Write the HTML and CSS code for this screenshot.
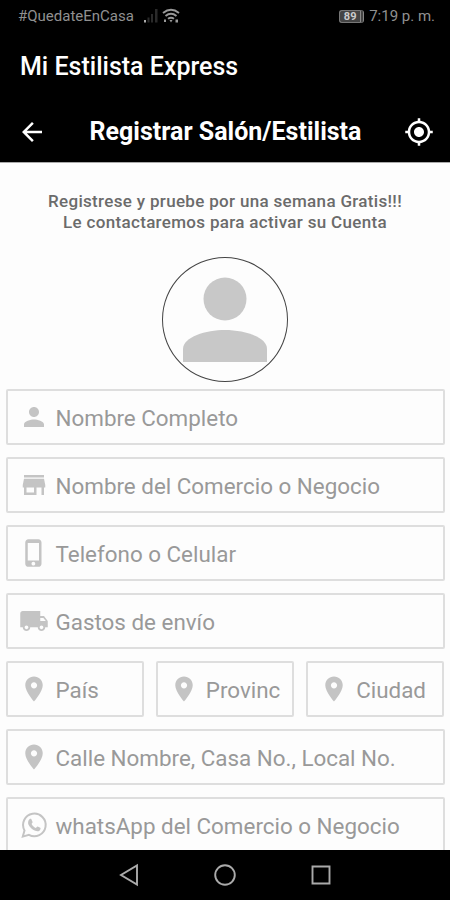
FILE: index.html
```html
<!DOCTYPE html>
<html lang="es">

<head>
    <meta charset="UTF-8">
    <meta name="viewport" content="width=device-width, initial-scale=1.0">
    <title>Mi Estilista Express</title>
    <link rel="stylesheet" href="styles.css">
</head>

<body>
    <div class="screen">
        <div class="status">
            <span class="carrier">#QuedateEnCasa</span>
            <svg class="signal" width="16" height="16" viewBox="0 0 16 16">
                <path fill="#aaa" d="M1 12h2v2.500H1z" />
                <path fill="#2a2a2a" d="M4.500 9.500h2v5h-2zM8 6h2v8.500H8zM12 1h2.500v13.500H12z" />
            </svg>
            <svg class="wifi" width="18" height="16" viewBox="0 0 18 16" fill="none" stroke="#999" stroke-width="1.900">
                <path d="M1 5Q9-1.500 17 5M3.500 8Q9 3.500 14.500 8M6 10.800Q9 8.500 12 10.800" />
                <path fill="#999" stroke="none" d="M7.500 12h3L9 14.500zM13.500 11.500h2.500V14.500h-2.500zM2 11.500h2V14H2z" />
            </svg>
            <span class="battery">89</span>
            <span class="clock">7:19 p. m.</span>
        </div>

        <h1 class="app-name">Mi Estilista Express</h1>

        <div class="toolbar">
            <svg width="30" height="30" viewBox="0 0 24 24" fill="#fff">
                <path d="M20 11H7.830l5.590-5.590L12 4l-8 8 8 8 1.410-1.410L7.830 13H20v-2z" />
            </svg>
            <h2 class="title">Registrar Salón/Estilista</h2>
            <svg width="30" height="30" viewBox="0 0 24 24" fill="#fff">
                <path d="M12 8c-2.210 0-4 1.790-4 4s1.790 4 4 4 4-1.790 4-4-1.790-4-4-4zm8.940 3c-.46-4.170-3.770-7.480-7.940-7.940V1h-2v2.060C6.830 3.520 3.520 6.830 3.060 11H1v2h2.060c.46 4.170 3.770 7.480 7.940 7.940V23h2v-2.060c4.170-.46 7.480-3.770 7.940-7.940H23v-2h-2.060zM12 19c-3.870 0-7-3.130-7-7s3.130-7 7-7 7 3.130 7 7-3.130 7-7 7z" />
            </svg>
        </div>

        <div class="content">
            <div class="intro">
                <p>Registrese y pruebe por una semana Gratis!!!</p>
                <p>Le contactaremos para activar su Cuenta</p>
            </div>

            <div class="avatar">
                <svg width="86" height="86" viewBox="0 0 86 86" fill="#c8c8c8">
                    <circle cx="43" cy="22" r="21.500" />
                    <path d="M1 85V72C1 60 24 53 43 53s42 7 42 19v13z" />
                </svg>
            </div>

            <div class="form">
                <div class="field">
                    <svg class="icon" width="30" height="30" viewBox="0 0 24 24">
                        <path d="M12 12c2.210 0 4-1.790 4-4s-1.790-4-4-4-4 1.790-4 4 1.790 4 4 4zm0 2c-2.670 0-8 1.340-8 4v2h16v-2c0-2.660-5.330-4-8-4z" />
                    </svg>
                    <span class="hint">Nombre Completo</span>
                </div>
                <div class="field">
                    <svg class="icon" width="30" height="30" viewBox="0 0 24 24">
                        <path d="M20 4H4v2h16V4zm1 10v-2l-1-5H4l-1 5v2h1v6h10v-6h4v6h2v-6h1zm-9 4H6v-4h6v4z" />
                    </svg>
                    <span class="hint">Nombre del Comercio o Negocio</span>
                </div>
                <div class="field">
                    <svg class="icon" width="30" height="30" viewBox="0 0 24 24">
                        <path d="M15.500 1h-8C6.120 1 5 2.120 5 3.500v17C5 21.880 6.120 23 7.500 23h8c1.380 0 2.500-1.120 2.500-2.500v-17C18 2.120 16.880 1 15.500 1zm-4 21c-.83 0-1.500-.67-1.500-1.500s.67-1.500 1.500-1.500 1.500.67 1.500 1.500-.67 1.500-1.500 1.500zm4.500-4H7V4h9v14z" />
                    </svg>
                    <span class="hint">Telefono o Celular</span>
                </div>
                <div class="field">
                    <svg class="icon" width="30" height="30" viewBox="0 0 24 24">
                        <path d="M20 8h-3V4H3c-1.100 0-2 .9-2 2v11h2c0 1.660 1.340 3 3 3s3-1.340 3-3h6c0 1.660 1.340 3 3 3s3-1.340 3-3h2v-5l-3-4zM6 18.500c-.83 0-1.500-.67-1.500-1.500s.67-1.500 1.500-1.500 1.500.67 1.500 1.500-.67 1.500-1.500 1.500zm13.500-9l1.960 2.500H17V9.500h2.500zm-1.500 9c-.83 0-1.500-.67-1.500-1.500s.67-1.500 1.500-1.500 1.500.67 1.500 1.500-.67 1.500-1.500 1.500z" />
                    </svg>
                    <span class="hint">Gastos de envío</span>
                </div>
                <div class="row">
                    <div class="field">
                        <svg class="icon" width="30" height="30" viewBox="0 0 24 24">
                            <path d="M12 2C8.130 2 5 5.130 5 9c0 5.250 7 13 7 13s7-7.750 7-13c0-3.870-3.130-7-7-7zm0 9.500c-1.380 0-2.500-1.120-2.500-2.500s1.120-2.500 2.500-2.500 2.500 1.120 2.500 2.500-1.120 2.500-2.500 2.500z" />
                        </svg>
                        <span class="hint">País</span>
                    </div>
                    <div class="field">
                        <svg class="icon" width="30" height="30" viewBox="0 0 24 24">
                            <path d="M12 2C8.130 2 5 5.130 5 9c0 5.250 7 13 7 13s7-7.750 7-13c0-3.870-3.130-7-7-7zm0 9.500c-1.380 0-2.500-1.120-2.500-2.500s1.120-2.500 2.500-2.500 2.500 1.120 2.500 2.500-1.120 2.500-2.500 2.500z" />
                        </svg>
                        <span class="hint">Provinc</span>
                    </div>
                    <div class="field">
                        <svg class="icon" width="30" height="30" viewBox="0 0 24 24">
                            <path d="M12 2C8.130 2 5 5.130 5 9c0 5.250 7 13 7 13s7-7.750 7-13c0-3.870-3.130-7-7-7zm0 9.500c-1.380 0-2.500-1.120-2.500-2.500s1.120-2.500 2.500-2.500 2.500 1.120 2.500 2.500-1.120 2.500-2.500 2.500z" />
                        </svg>
                        <span class="hint">Ciudad</span>
                    </div>
                </div>
                <div class="field">
                    <svg class="icon" width="30" height="30" viewBox="0 0 24 24">
                        <path d="M12 2C8.130 2 5 5.130 5 9c0 5.250 7 13 7 13s7-7.750 7-13c0-3.870-3.130-7-7-7zm0 9.500c-1.380 0-2.500-1.120-2.500-2.500s1.120-2.500 2.500-2.500 2.500 1.120 2.500 2.500-1.120 2.500-2.500 2.500z" />
                    </svg>
                    <span class="hint">Calle Nombre, Casa No., Local No.</span>
                </div>
                <div class="field">
                    <svg class="icon" width="30" height="30" viewBox="0 0 30 30">
                        <path class="bubble" d="M3.800 26.600l1.700-6.200a11.300 11.300 0 1 1 4.400 4.400z" />
                        <path d="M10.500 9.200c.5-.6 1.600-.6 1.900 0l1.200 2.800c.2.700-.9 1.500-1 2 .8 1.800 2.300 3.100 4.100 3.900.6 0 1.200-1.500 1.900-1.400l2.700 1.300c.6.400.1 2-.6 2.600-1.300 1.100-3 1-4.500.4-3-1-5.500-3.400-6.800-6.300-.6-1.800-.4-4 1.100-5.300z" />
                    </svg>
                    <span class="hint">whatsApp del Comercio o Negocio</span>
                </div>
            </div>
        </div>

        <div class="navbar">
            <svg width="20" height="24" viewBox="0 0 20 24">
                <path d="M18 2.500v19L2 12z" />
            </svg>
            <svg width="24" height="24" viewBox="0 0 24 24">
                <circle cx="12" cy="12" r="9.800" />
            </svg>
            <svg width="20" height="24" viewBox="0 0 20 24">
                <path d="M1.500 3.500h17v17h-17z" />
            </svg>
        </div>
    </div>
</body>

</html>
```
FILE: styles.css
```css
* {
    padding: 0;
    margin: 0;
    box-sizing: border-box;
    font-family: Roboto, "Liberation Sans", sans-serif;
}

.screen {
    display: flex;
    flex-direction: column;
    width: 450px;
    height: 900px;
    overflow: hidden;
    background: #fdfdfd;
}

.status {
    display: flex;
    align-items: center;
    height: 32px;
    padding: 0 15px 0 18px;
    background: #000;
    color: #909090;
    font-size: 15px;
    white-space: nowrap;
}

.signal {
    margin-left: 9px;
}

.wifi {
    margin-left: 3px;
}

.battery {
    width: 25px;
    height: 13px;
    margin-left: auto;
    border: 1px solid #777;
    border-right: 4px double #888;
    border-radius: 3px;
    background: #444;
    color: #ccc;
    font-size: 11px;
    font-weight: 700;
    line-height: 11px;
    text-align: center;
}

.clock {
    margin-left: 5px;
}

.app-name {
    height: 69px;
    padding-left: 20px;
    background: #000;
    color: #fff;
    font-size: 25px;
    font-weight: 500;
    line-height: 70px;
}

.toolbar {
    display: flex;
    justify-content: space-between;
    align-items: center;
    height: 61px;
    padding: 0 16px 0 17px;
    background: #000;
}

.title {
    color: #fff;
    font-size: 25px;
    font-weight: 700;
}

.content {
    display: flex;
    flex: 1;
    flex-direction: column;
    align-items: center;
    min-height: 0;
    overflow: hidden;
    border-top: 1px solid #aaa;
}

.intro {
    margin-top: 28px;
    color: #6b6b6b;
    font-size: 17px;
    font-weight: 500;
    letter-spacing: 0.32px;
    line-height: 20.500px;
    text-align: center;
    white-space: nowrap;
}

.avatar {
    display: flex;
    flex-shrink: 0;
    justify-content: center;
    width: 126px;
    height: 125px;
    margin-top: 25px;
    padding-top: 19px;
    border: 1px solid #444;
    border-radius: 50%;
}

.form {
    display: flex;
    flex-direction: column;
    gap: 12px;
    width: 439px;
    margin-top: 7px;
}

.field {
    display: flex;
    flex: 1;
    align-items: center;
    min-height: 56px;
    padding-left: 11px;
    border: 2px solid #dedede;
    border-radius: 2px;
    overflow: hidden;
}

.row {
    display: flex;
    gap: 12px;
}

.icon {
    flex-shrink: 0;
    fill: #c4c4c4;
}

.bubble {
    fill: none;
    stroke: #c4c4c4;
    stroke-width: 2px;
}

.hint {
    margin-left: 7px;
    padding-top: 2px;
    color: #999;
    font-size: 22.400px;
    white-space: nowrap;
}

.navbar {
    display: flex;
    justify-content: center;
    align-items: center;
    gap: 74px;
    height: 50px;
    background: #000;
}

.navbar svg {
    fill: none;
    stroke: #aaa;
    stroke-width: 1.900px;
}
```
